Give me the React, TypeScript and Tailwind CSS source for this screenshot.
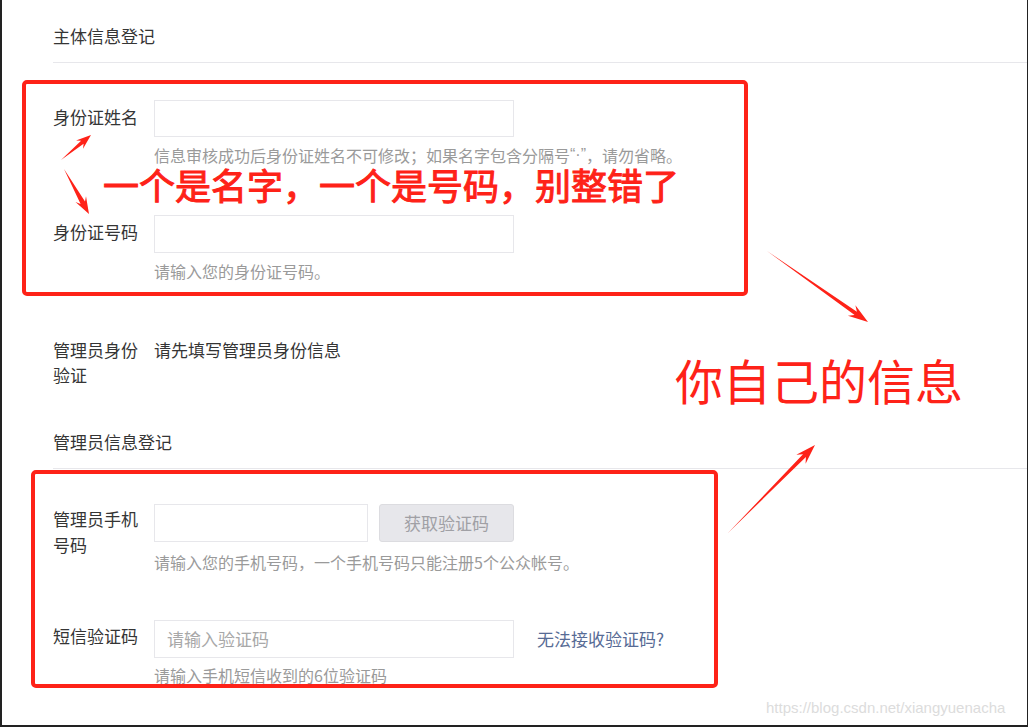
import React from "react";

const FONT = '"Noto Sans CJK SC", "Noto Sans", sans-serif';

function arrowPoints(x1: number, y1: number, x2: number, y2: number, shaftW = 5, headW = 13, headLen = 17) {
  const dx = x2 - x1;
  const dy = y2 - y1;
  const len = Math.hypot(dx, dy);
  const ux = dx / len;
  const uy = dy / len;
  const nx = -uy;
  const ny = ux;
  const neckX = x2 - ux * headLen * 0.75;
  const neckY = y2 - uy * headLen * 0.75;
  const barbX = x2 - ux * headLen;
  const barbY = y2 - uy * headLen;
  const pts = [
    [x1, y1],
    [neckX + (nx * shaftW) / 2, neckY + (ny * shaftW) / 2],
    [barbX + (nx * headW) / 2, barbY + (ny * headW) / 2],
    [x2, y2],
    [barbX - (nx * headW) / 2, barbY - (ny * headW) / 2],
    [neckX - (nx * shaftW) / 2, neckY - (ny * shaftW) / 2],
  ];
  return pts.map((p) => `${p[0].toFixed(1)},${p[1].toFixed(1)}`).join(" ");
}

function Row({
  label,
  children,
  help,
  labelClass = "",
  helpClass = "mt-[6px]",
}: {
  label: string;
  children: React.ReactNode;
  help?: React.ReactNode;
  labelClass?: string;
  helpClass?: string;
}) {
  return (
    <div className="flex">
      <div className={`w-[101px] shrink-0 pr-[14px] text-[17px] text-[#353535] ${labelClass}`}>{label}</div>
      <div className="flex flex-col">
        {children}
        {help && (
          <div className={`${helpClass} h-[24px] text-[16px] leading-[24px] text-[#9a9a9a] whitespace-nowrap`}>{help}</div>
        )}
      </div>
    </div>
  );
}

export default function App() {
  const red = "#fe2218";
  return (
    <div
      className="relative w-[1028px] h-[727px] overflow-hidden bg-white border-l-2 border-r border-b-2 border-[#222222]"
      style={{ fontFamily: FONT }}
    >
      <div className="pl-[51px]">
        {/* section 1 heading */}
        <div className="pt-[24px] pb-[14px] border-b border-[#e7e7eb] text-[17px] leading-[24px] text-[#353535]">
          主体信息登记
        </div>

        <div className="mt-[37px]">
          <Row
            label="身份证姓名"
            labelClass="leading-[33px]"
            helpClass="mt-[6px]"
            help={
              <>
                信息审核成功后身份证姓名不可修改；如果名字包含分隔号
                <span
                  className="inline-block h-[24px] leading-[24px] align-top"
                  style={{ fontFamily: '"Liberation Sans", Arial, sans-serif' }}
                >
                  “·”
                </span>
                ，请勿省略。
              </>
            }
          >
            <div className="w-[360px] h-[37px] border border-[#e7e7eb] bg-white" />
          </Row>
        </div>

        <div className="mt-[48px]">
          <Row label="身份证号码" labelClass="leading-[33px]" helpClass="mt-[6px]" help="请输入您的身份证号码。">
            <div className="w-[360px] h-[38px] border border-[#e7e7eb] bg-white" />
          </Row>
        </div>

        <div className="mt-[54px] flex text-[17px] leading-[25px] text-[#353535]">
          <div className="w-[101px] shrink-0 pr-[14px]">管理员身份验证</div>
          <div>请先填写管理员身份信息</div>
        </div>

        {/* section 2 heading */}
        <div className="mt-[43px] pb-[14px] border-b border-[#e7e7eb] text-[17px] leading-[24px] text-[#353535]">
          管理员信息登记
        </div>

        <div className="mt-[35px]">
          <Row
            label="管理员手机号码"
            labelClass="pt-[2px] leading-[26px]"
            helpClass="mt-[8px]"
            help="请输入您的手机号码，一个手机号码只能注册5个公众帐号。"
          >
            <div className="flex gap-[11px]">
              <div className="w-[214px] h-[38px] border border-[#e7e7eb] bg-white" />
              <div className="w-[135px] h-[38px] rounded-[3px] border border-[#dcdce0] bg-[#e7e7eb] flex items-center justify-center text-[17px] text-[#a0a0a5]">
                获取验证码
              </div>
            </div>
          </Row>
        </div>

        <div className="mt-[46px]">
          <Row label="短信验证码" labelClass="leading-[32px]" helpClass="mt-[5px]" help="请输入手机短信收到的6位验证码">
            <div className="flex items-center">
              <div className="w-[360px] h-[38px] border border-[#e7e7eb] bg-white flex items-center pl-[12px] text-[17px] text-[#a8a8a8]">
                请输入验证码
              </div>
              <div className="ml-[23px] text-[17px] text-[#576b95] whitespace-nowrap">无法接收验证码?</div>
            </div>
          </Row>
        </div>
      </div>

      {/* annotation overlay */}
      <svg className="absolute left-0 top-0 pointer-events-none" width={1028} height={727} viewBox="2 0 1028 727">
        <rect x={24} y={82} width={722} height={212} rx={3} fill="none" stroke={red} strokeWidth={4} />
        <rect x={33} y={472} width={683} height={214} rx={3} fill="none" stroke={red} strokeWidth={4} />
        <polygon points={arrowPoints(61, 160, 91, 135, 4, 11, 15)} fill={red} />
        <polygon points={arrowPoints(64, 169, 89, 214, 5, 12, 17)} fill={red} />
        <polygon points={arrowPoints(767, 251, 868, 322, 4, 13, 20)} fill={red} />
        <polygon points={arrowPoints(728, 533, 815, 445, 4, 13, 20)} fill={red} />
      </svg>

      <div className="absolute left-[101px] top-[166px] text-[36px] leading-[36px] font-normal [-webkit-text-stroke:1px_#fe2218] whitespace-nowrap text-[#fe2218]">
        一个是名字，一个是号码，别整错了
      </div>
      <div className="absolute left-[673px] top-[349px] text-[48px] leading-[60px] whitespace-nowrap text-[#fe2218]">
        你自己的信息
      </div>
      <div
        className="absolute left-[764px] top-[698px] text-[15px] leading-[20px] text-[#dcdcdc] whitespace-nowrap"
        style={{ fontFamily: '"Liberation Sans", Arial, sans-serif' }}
      >
        https://blog.csdn.net/xiangyuenacha
      </div>
    </div>
  );
}
